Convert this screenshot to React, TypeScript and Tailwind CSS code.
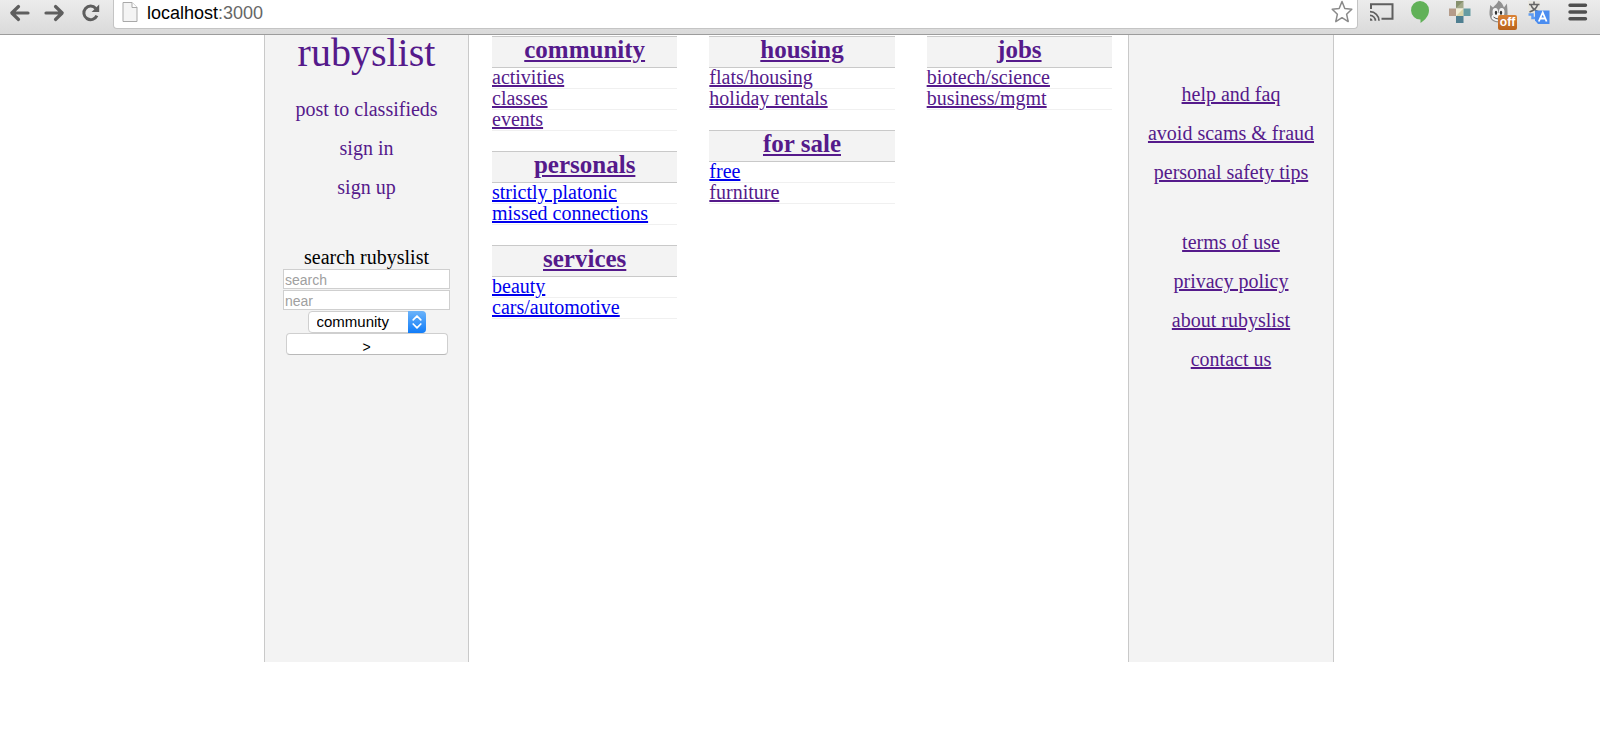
import React from "react";

const VISITED = "text-[#551a8b]";
const FRESH = "text-[#0000ee]";

type Item = { label: string; fresh?: boolean };
type Section = { title: string; items: Item[] };

const columns: Section[][] = [
  [
    { title: "community", items: [{ label: "activities" }, { label: "classes" }, { label: "events" }] },
    { title: "personals", items: [{ label: "strictly platonic", fresh: true }, { label: "missed connections", fresh: true }] },
    { title: "services", items: [{ label: "beauty", fresh: true }, { label: "cars/automotive", fresh: true }] },
  ],
  [
    { title: "housing", items: [{ label: "flats/housing" }, { label: "holiday rentals" }] },
    { title: "for sale", items: [{ label: "free", fresh: true }, { label: "furniture" }] },
  ],
  [{ title: "jobs", items: [{ label: "biotech/science" }, { label: "business/mgmt" }] }],
];

const helpLinks = ["help and faq", "avoid scams & fraud", "personal safety tips"];
const aboutLinks = ["terms of use", "privacy policy", "about rubyslist", "contact us"];

function Arrow({ flip = false }: { flip?: boolean }) {
  return (
    <svg width="22" height="20" viewBox="0 0 22 20" className={flip ? "-scale-x-100" : ""} fill="none" stroke="#5e5e5e" strokeWidth="3.2" strokeLinecap="round" strokeLinejoin="round">
      <path d="M9.500 3.500 2.800 10l6.700 6.500M3.500 10h15.500" />
    </svg>
  );
}

function Toolbar() {
  return (
    <header className="flex h-[35px] items-start border-b border-[#9c9c9c] bg-linear-to-b from-[#ececec] to-[#dadada] font-['Liberation_Sans',sans-serif]">
      <nav className="flex h-[25px] items-center gap-3 pr-3 pl-[9px]">
        <button aria-label="Back"><Arrow /></button>
        <button aria-label="Forward"><Arrow flip /></button>
        <button aria-label="Reload" className="pl-1">
          <svg width="20" height="20" viewBox="0 0 20 20" fill="none">
            <path d="M14.800 5.400A6.800 6.800 0 1 0 15.900 12.600" stroke="#5e5e5e" strokeWidth="3" />
            <path d="M18.200 1.400v7.600h-7.600z" fill="#5e5e5e" />
          </svg>
        </button>
      </nav>
      <div className="flex h-[29px] flex-1 items-start rounded-b border-x border-b border-[#c4c4c4] bg-white pr-1 pl-2">
        <svg width="16" height="22" viewBox="0 0 16 22" className="mt-px" aria-hidden="true">
          <path d="M1 1.500h9l5 5v14H1z" fill="#f4f4f4" stroke="#a9a9a9" />
          <path d="M10 1.500v5h5" fill="#fff" stroke="#a9a9a9" />
        </svg>
        <div className="h-6 flex-1 pl-[9px] text-[18px] leading-[27px] text-[#666]">
          <span className="text-black">localhost</span>:3000
        </div>
        <button aria-label="Bookmark">
          <svg width="24" height="24" viewBox="0 0 24 24" fill="#fff" stroke="#8a8a8a" strokeWidth="1.500" strokeLinejoin="round">
            <path d="m13 1.500 2.800 7 7 .7-5.200 5 1.600 7.400-6.200-3.900-6.200 3.900 1.600-7.400-5.200-5 7-.7z" />
          </svg>
        </button>
      </div>
      <div className="flex h-[34px] items-start pr-3 pl-2.5">
        <button aria-label="Cast" className="mr-[14px]">
          <svg width="26" height="24" viewBox="0 0 26 24" fill="none" stroke="#5f5f5f" strokeWidth="2">
            <path d="M3 9V4.200h21.500v14.600H13.500" />
            <path d="M2 11.700a9 9 0 0 1 9 9M2 15.400a5.400 5.400 0 0 1 5.400 5.400" strokeWidth="1.700" />
            <path d="M2 18.300a2.500 2.500 0 0 1 2.500 2.500H2z" fill="#5f5f5f" stroke="none" />
          </svg>
        </button>
        <button aria-label="Hangouts" className="mr-4">
          <svg width="24" height="24" viewBox="0 0 24 24">
            <path d="M12 1a9 9 0 0 1 9 9.200c0 5.500-4 9.800-8.500 12.800v-3.600A9 9 0 1 1 12 1z" fill="#61b158" />
          </svg>
        </button>
        <button aria-label="Extension" className="mr-4">
          <svg width="24" height="24" viewBox="0 0 24 24">
            <path d="M8 1h7.500v7.500H8z" fill="#a3a98a" />
            <path d="M8 1h7.500L8 8z" fill="#86906d" />
            <path d="M1 8.500h7v7.500H1z" fill="#b59c8a" />
            <path d="M8 8.500h7.500V16H8z" fill="#f1edd6" />
            <path d="m8 16 7.500-7.500V16z" fill="#d8d3a8" />
            <path d="M15.500 8.500h7V16h-7z" fill="#679ca2" />
            <path d="M8 16h7.500v7H8z" fill="#4f7f91" />
          </svg>
        </button>
        <button aria-label="Ghost extension, off" className="relative mr-[10px] h-[31px] w-[29px]">
          <svg width="29" height="24" viewBox="0 0 29 24" className="absolute top-0 left-0">
            <path d="M10.500.5c3.500 2 4.500 4.500 5.500 7l3-4c0 3 .5 5 .5 8 .8 7-3.500 11-9 11S1 19 1.500 12c.2-3 .8-4.500 .5-7l3 2.500c2-2.500 4.500-4 5.500-7z" fill="#909090" />
            <ellipse cx="7.300" cy="12" rx="2.800" ry="4" fill="#f4f4f4" />
            <ellipse cx="13.700" cy="12" rx="2.800" ry="4" fill="#f4f4f4" />
            <ellipse cx="10.500" cy="17" rx="7" ry="4.300" fill="#f4f4f4" />
            <ellipse cx="8" cy="12.800" rx="1.200" ry="2.100" fill="#333" />
            <ellipse cx="13" cy="12.800" rx="1.200" ry="2.100" fill="#333" />
            <path d="M5.500 17q5 4 10 0" fill="none" stroke="#555" />
          </svg>
          <span className="absolute right-0 bottom-px h-[15px] w-[19px] rounded-xs bg-linear-to-b from-[#d98236] to-[#b9621a] text-[12px] leading-[14px] font-bold text-white">off</span>
        </button>
        <button aria-label="Translate" className="mr-[15px]">
          <svg width="24" height="24" viewBox="0 0 24 24">
            <path d="M1 1h12v17H1z" fill="#e8e6df" />
            <path d="M7 1.500v3M2 4.500h10.500M4 5c1 3 4 5.500 8 7M10.500 5c-1 3-3.500 5.500-8 7" fill="none" stroke="#666" strokeWidth="1.600" />
            <path d="M8 10.500h14.500V24H11L8 20.500z" fill="#4b8df0" />
            <path d="m11.800 21.500 3.900-9 3.900 9M13.200 18.500h5" fill="none" stroke="#fff" strokeWidth="1.800" />
            <path d="M1.500 14.500h4v3.500H8" fill="none" stroke="#5f9cf3" strokeWidth="2.500" />
          </svg>
        </button>
        <button aria-label="Menu">
          <svg width="22" height="24" viewBox="0 0 22 24" stroke="#505050" strokeWidth="3.400" strokeLinecap="round">
            <path d="M4 5.300h15.500M4 12h15.500M4 18.700h15.500" />
          </svg>
        </button>
      </div>
    </header>
  );
}

function Category({ title, items }: Section) {
  return (
    <section>
      <h2 className="h-8 border-y border-[#c9c9c9] bg-[#f3f3f3] text-center text-[25px] leading-[26px] font-bold">
        <a href="#" className={`underline ${VISITED}`}>{title}</a>
      </h2>
      <ul>
        {items.map((item) => (
          <li key={item.label} className="h-[21px] border-b border-[#f0f0f0] leading-[18px]">
            <a href="#" className={`underline ${item.fresh ? FRESH : VISITED}`}>{item.label}</a>
          </li>
        ))}
      </ul>
    </section>
  );
}

function LinkList({ labels }: { labels: string[] }) {
  return (
    <ul className={`leading-[39px] ${VISITED}`}>
      {labels.map((label) => (
        <li key={label}><a href="#" className="underline">{label}</a></li>
      ))}
    </ul>
  );
}

function SearchForm() {
  return (
    <form className="mt-[39px] flex flex-col items-center font-['Liberation_Sans',sans-serif]" onSubmit={(e) => e.preventDefault()}>
      <label htmlFor="search" className="font-['Liberation_Serif',serif] leading-[23px]">search rubyslist</label>
      <input id="search" placeholder="search" className="h-5 w-[167px] border border-[#cfcfcf] bg-white px-px pt-0.5 text-[14px] placeholder:text-[#a0a0a0]" />
      <input aria-label="near" placeholder="near" className="mt-px h-5 w-[167px] border border-[#cfcfcf] bg-white px-px pt-0.5 text-[14px] placeholder:text-[#a0a0a0]" />
      <div className="relative mt-px">
        <select aria-label="category" className="block h-[22px] w-[118px] appearance-none rounded border border-[#cfcfcf] bg-white pl-2 text-[15px] leading-5 text-black">
          <option>community</option>
          <option>personals</option>
          <option>housing</option>
          <option>jobs</option>
        </select>
        <svg width="18" height="22" viewBox="0 0 18 22" className="pointer-events-none absolute top-0 right-0" aria-hidden="true">
          <defs>
            <linearGradient id="stepper" x1="0" y1="0" x2="0" y2="1">
              <stop offset="0" stopColor="#6bb3fa" />
              <stop offset="1" stopColor="#117cf8" />
            </linearGradient>
          </defs>
          <path d="M0 0h14a4 4 0 0 1 4 4v14a4 4 0 0 1-4 4H0z" fill="url(#stepper)" />
          <path d="m5.200 8.800 3.800-3.800 3.800 3.800M5.200 13l3.800 3.800 3.800-3.800" fill="none" stroke="#fff" strokeWidth="1.700" strokeLinecap="round" strokeLinejoin="round" />
        </svg>
      </div>
      <button type="submit" className="h-[22px] w-[162px] rounded border border-[#cfcfcf] border-b-[#b9b9b9] bg-white pt-1.5 text-[14px] leading-[14px] text-black">&gt;</button>
    </form>
  );
}

export default function App() {
  return (
    <div className="min-h-screen bg-white">
      <Toolbar />
      <div className="mx-auto grid min-h-[627px] max-w-[1072px] grid-cols-[205px_1fr_206px] pr-0.5 font-['Liberation_Serif',serif] text-[20px]">
        <aside className="border-x border-[#c9c9c9] bg-[#f3f3f3] text-center">
          <h1 className={`mb-5 text-[40px] leading-[35px] ${VISITED}`}><a href="#">rubyslist</a></h1>
          <ul className={`leading-[39px] ${VISITED}`}>
            <li><a href="#">post to classifieds</a></li>
            <li><a href="#">sign in</a></li>
            <li><a href="#">sign up</a></li>
          </ul>
          <SearchForm />
        </aside>
        <main className="grid grid-cols-3 gap-x-8 pt-px pr-4 pl-[23px]">
          {columns.map((sections, i) => (
            <div key={i} className="flex flex-col gap-5">
              {sections.map((s) => <Category key={s.title} {...s} />)}
            </div>
          ))}
        </main>
        <aside className="flex flex-col gap-[31px] border-x border-[#c9c9c9] bg-[#f3f3f3] pt-10 text-center">
          <LinkList labels={helpLinks} />
          <LinkList labels={aboutLinks} />
        </aside>
      </div>
    </div>
  );
}
